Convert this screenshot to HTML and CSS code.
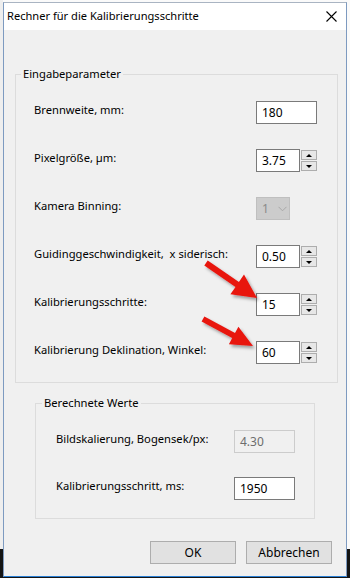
FILE: index.html
```html
<!DOCTYPE html>
<html lang="de">
<head>
<meta charset="utf-8">
<title>Rechner für die Kalibrierungsschritte</title>
<link rel="stylesheet" href="styles.css">
</head>
<body>
<div class="screen">
  <div class="window">
    <div class="titlebar">
      <span class="title">Rechner für die Kalibrierungsschritte</span>
      <svg class="close" width="11" height="11" viewBox="0 0 11 11"><path d="M0.5 0.5 L10.5 10.5 M10.5 0.5 L0.5 10.5" stroke="#000" stroke-width="1.1" fill="none"/></svg>
    </div>
    <div class="client">
      <fieldset class="group group-input">
        <legend>Eingabeparameter</legend>
        <div class="row">
          <span class="label">Brennweite, mm:</span>
          <div class="ctl"><span class="textbox wide">180</span></div>
        </div>
        <div class="row">
          <span class="label">Pixelgröße, µm:</span>
          <div class="ctl"><span class="textbox">3.75</span><span class="spin"><span class="sb up"></span><span class="sb down"></span></span></div>
        </div>
        <div class="row">
          <span class="label">Kamera Binning:</span>
          <div class="ctl"><span class="combo">1<svg class="chev" width="9" height="6" viewBox="0 0 9 6"><path d="M0.5 0.8 L4.5 4.8 L8.5 0.8" stroke="#a8a8a8" stroke-width="1" fill="none"/></svg></span></div>
        </div>
        <div class="row">
          <span class="label">Guidinggeschwindigkeit,&nbsp; x siderisch:</span>
          <div class="ctl"><span class="textbox">0.50</span><span class="spin"><span class="sb up"></span><span class="sb down"></span></span></div>
        </div>
        <div class="row">
          <span class="label">Kalibrierungsschritte:</span>
          <div class="ctl"><span class="textbox">15</span><span class="spin"><span class="sb up"></span><span class="sb down"></span></span></div>
        </div>
        <div class="row">
          <span class="label">Kalibrierung Deklination, Winkel:</span>
          <div class="ctl"><span class="textbox">60</span><span class="spin"><span class="sb up"></span><span class="sb down"></span></span></div>
        </div>
      </fieldset>
      <fieldset class="group group-calc">
        <legend>Berechnete Werte</legend>
        <div class="row">
          <span class="label">Bildskalierung, Bogensek/px:</span>
          <div class="ctl"><span class="textbox wide disabled">4.30</span></div>
        </div>
        <div class="row">
          <span class="label">Kalibrierungsschritt, ms:</span>
          <div class="ctl"><span class="textbox wide">1950</span></div>
        </div>
      </fieldset>
      <div class="buttons">
        <span class="btn">OK</span>
        <span class="btn">Abbrechen</span>
      </div>
    </div>
  </div>
  <svg class="arrows" width="350" height="578" viewBox="0 0 350 578">
    <defs>
      <filter id="sh" x="-20%" y="-20%" width="150%" height="150%">
        <feDropShadow dx="2" dy="2.5" stdDeviation="1.6" flood-color="#000" flood-opacity="0.35"/>
      </filter>
    </defs>
    <polygon filter="url(#sh)" fill="#e8140f" points="204.3,265.5 235.5,286.9 230.4,294.3 257,298 244.0,274.5 238.9,281.9 207.7,260.5"/>
    <polygon filter="url(#sh)" fill="#e8140f" points="201.6,321.6 232.2,338.1 228.9,344.3 253,346 238.4,326.7 235.0,332.9 204.4,316.4"/>
  </svg>
</div>
</body>
</html>
```
FILE: styles.css
```css
* { box-sizing: border-box; }
html, body { margin: 0; padding: 0; }
body {
  font-family: "Noto Sans", "Open Sans", sans-serif;
  font-size: 11.2px;
  color: #000;
}
.screen {
  position: relative;
  width: 350px;
  height: 578px;
  overflow: hidden;
  background:
    linear-gradient(to bottom, transparent 0, transparent 549px, #141414 549px),
    linear-gradient(to right, #eeeeee 0, #eeeeee 3px, #fafafa 3px);
  padding-top: 2px;
  padding-left: 3px;
}
.window {
  width: 344px;
  height: 575px;
  border: 1px solid #7d9ac0;
  border-top-color: #a9b4c2;
  border-bottom-color: #2a7fd4;
  display: flex;
  flex-direction: column;
  background: #f0f0f0;
}
.titlebar {
  height: 27px;
  flex: none;
  background: #fff;
  display: flex;
  align-items: center;
  justify-content: space-between;
  padding: 0 9px 1px 3px;
}
.title { font-size: 11.1px; line-height: 16px; }
.close { display: block; }
.client {
  flex: 1;
  display: flex;
  flex-direction: column;
  padding: 36px 8px 0 11px;
}
.group {
  margin: 0;
  border: 1px solid #dcdcdc;
  display: flex;
  flex-direction: column;
  min-width: 0;
}
.group legend {
  font-size: 11.2px;
  line-height: 16px;
  padding: 0 2px;
}
.group-input {
  padding: 19px 20px 18px 18px;
  gap: 25px;
}
.group-input legend { margin-left: -13px; }
.group-calc {
  margin: 12px 0 0 20px;
  width: 280px;
  padding: 19px 19px 18px 20px;
  gap: 24px;
}
.group-calc legend { margin-left: -14px; }
.row {
  height: 23px;
  display: flex;
  justify-content: space-between;
  align-items: flex-start;
}
.label {
  line-height: 16px;
  padding-top: 1px;
  white-space: pre;
}
.ctl {
  display: flex;
  width: 61px;
  height: 23px;
  gap: 1px;
}
.textbox {
  width: 44px;
  height: 23px;
  background: #fff;
  border: 1px solid #7a7a7a;
  padding: 0 0 0 5px;
  line-height: 21px;
  font-size: 12px;
}
.textbox.wide { width: 61px; }
.textbox.disabled {
  background: #f0f0f0;
  border-color: #cccccc;
  color: #6d6d6d;
}
.spin {
  width: 16px;
  display: flex;
  flex-direction: column;
  gap: 1px;
  padding-top: 1px;
}
.sb {
  height: 10px;
  background: #e7e7e7;
  border: 1px solid #adadad;
  display: flex;
  align-items: center;
  justify-content: center;
}
.sb::after {
  content: "";
  width: 0;
  height: 0;
  border-left: 3px solid transparent;
  border-right: 3px solid transparent;
}
.sb.up::after { border-bottom: 3px solid #000; }
.sb.down::after { border-top: 3px solid #000; }
.combo {
  width: 34px;
  height: 23px;
  background: #cccccc;
  border: 1px solid #bfbfbf;
  color: #8a8a8a;
  font-size: 12px;
  line-height: 21px;
  padding-left: 5px;
  display: flex;
  align-items: center;
  gap: 9px;
}
.chev { display: block; }
.buttons {
  display: flex;
  justify-content: flex-end;
  gap: 10px;
  margin: 22px 6px 0 0;
}
.btn {
  width: 86px;
  height: 23px;
  background: #e1e1e1;
  border: 1px solid #adadad;
  text-align: center;
  line-height: 21px;
  font-size: 12px;
}
.arrows {
  position: absolute;
  left: 0;
  top: 0;
  pointer-events: none;
}
```
